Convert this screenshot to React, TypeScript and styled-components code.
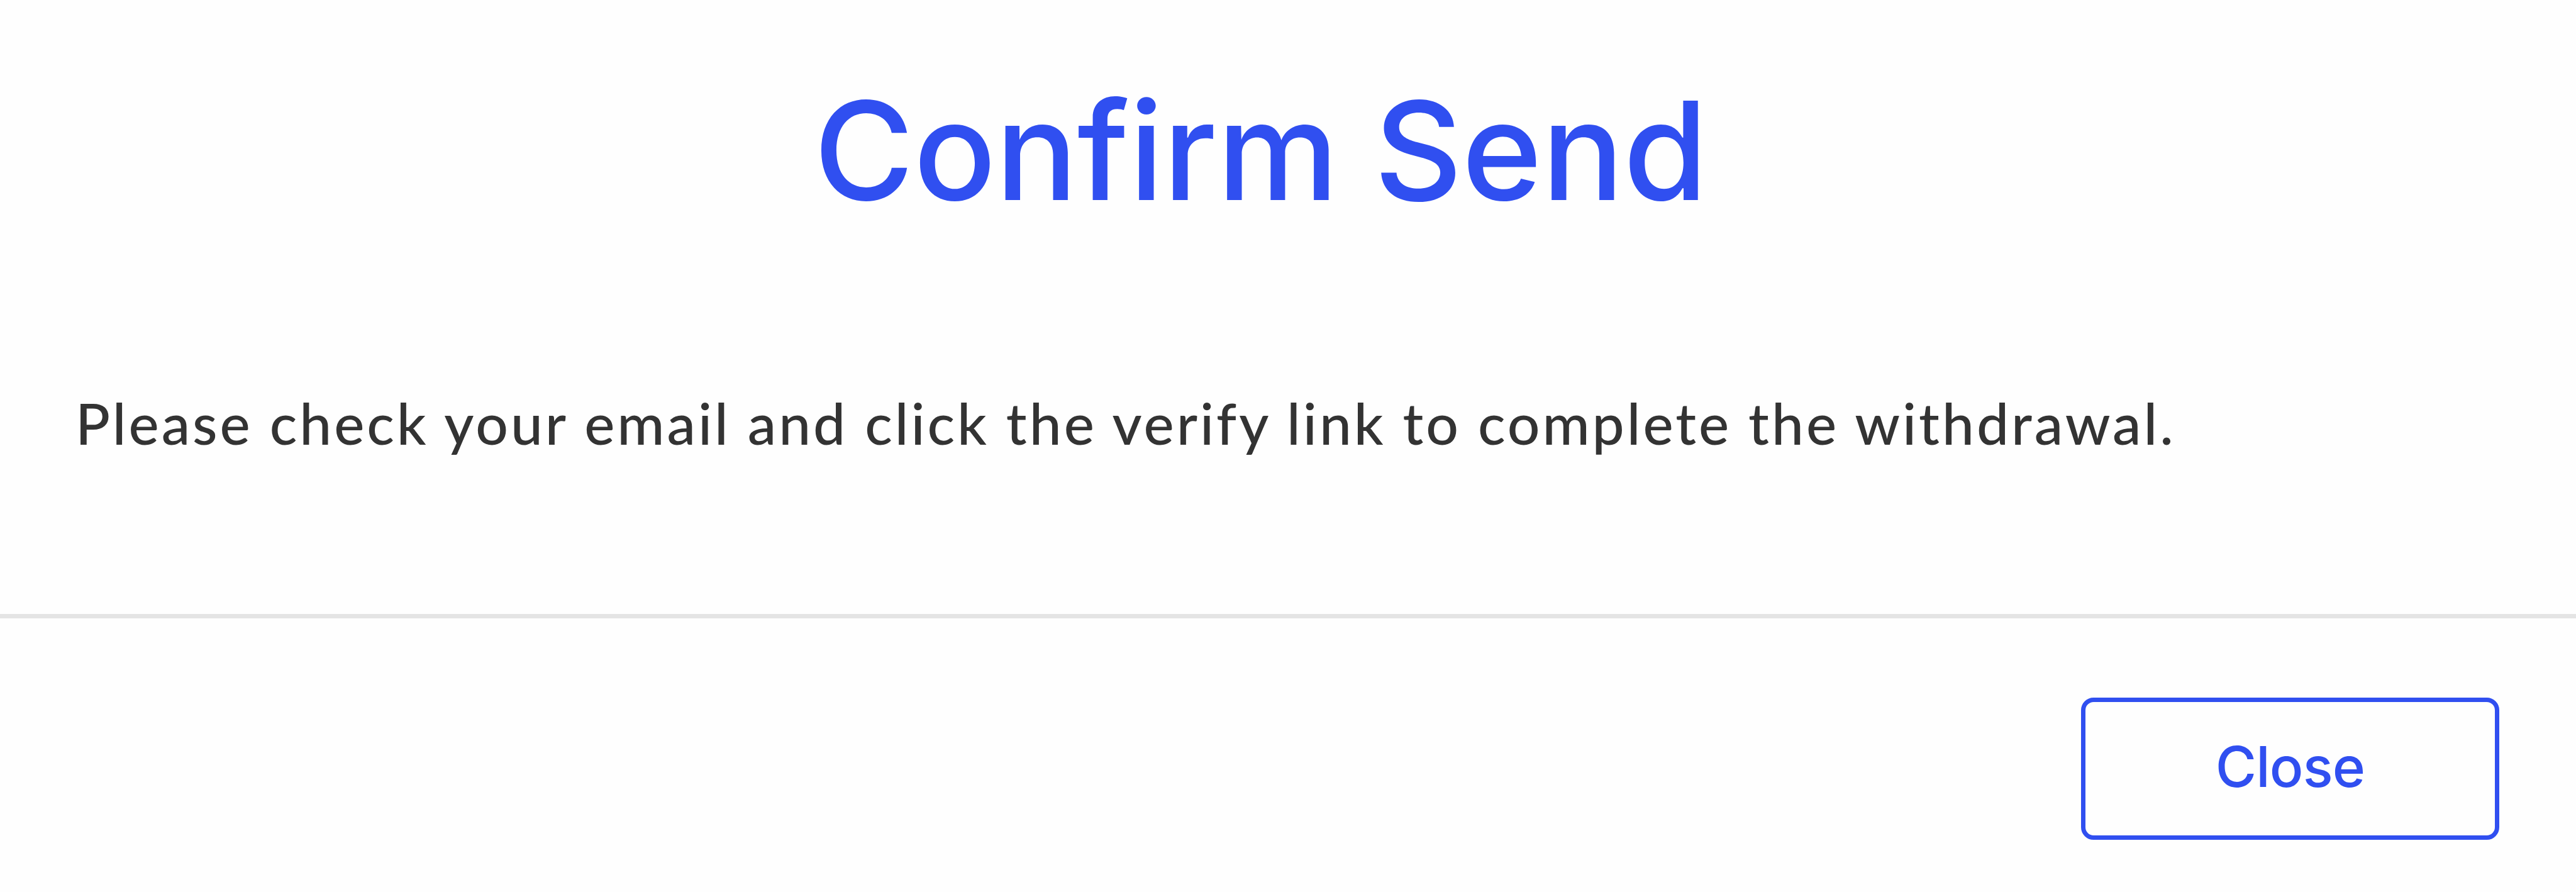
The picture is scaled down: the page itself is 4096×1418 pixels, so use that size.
import React from "react";
import styled, { createGlobalStyle } from "styled-components";

const GlobalStyle = createGlobalStyle`
  *, *::before, *::after {
    box-sizing: border-box;
  }
  :root {
    --blue: #304ff0;
    --text: #333333;
    --line: #e4e4e4;
    --white: #fefefe;
  }
  body {
    margin: 0;
    background: var(--white);
    font-family: Lato, "Liberation Sans", sans-serif;
    font-weight: 500;
  }
`;

const Modal = styled.div`
  display: flex;
  flex-direction: column;
  width: 100%;
  height: 100vh;
  overflow: hidden;
  background: var(--white);
`;
const Header = styled.header`
  display: flex;
  align-items: center;
  justify-content: center;
  height: 466px;
  padding: 12px 87px 0 0;
`;
const Title = styled.h1`
  margin: 0;
  font-family: Inter, "Liberation Sans", sans-serif;
  font-size: 217px;
  font-weight: 450;
  line-height: 1.2;
  letter-spacing: -0.6px;
  white-space: nowrap;
  color: var(--blue);
`;
const Body = styled.main`
  height: 510px;
  padding: 138px 120px 0;
`;
const Message = styled.p`
  margin: 0;
  font-size: 91px;
  line-height: 136px;
  letter-spacing: 3.98px;
  white-space: nowrap;
  color: var(--text);
`;
const Footer = styled.footer`
  display: flex;
  flex: 1 1 0;
  align-items: flex-start;
  justify-content: flex-end;
  padding: 126px 122px 0 0;
  border-top: 7px solid var(--line);
`;
const Button = styled.button`
  display: flex;
  align-items: center;
  justify-content: center;
  width: 665px;
  height: 226px;
  padding: 0 0 7px;
  border: 7px solid var(--blue);
  border-radius: 20px;
  background: transparent;
  font-family: Inter, "Liberation Sans", sans-serif;
  font-size: 89px;
  font-weight: 450;
  letter-spacing: -0.8px;
  color: var(--blue);
  cursor: pointer;
`;

const App: React.FC = () => (
  <>
    <GlobalStyle />
    <Modal>
      <Header>
        <Title>Confirm Send</Title>
      </Header>
      <Body>
        <Message>Please check your email and click the verify link to complete the withdrawal.</Message>
      </Body>
      <Footer>
        <Button type="button">Close</Button>
      </Footer>
    </Modal>
  </>
);

export default App;
